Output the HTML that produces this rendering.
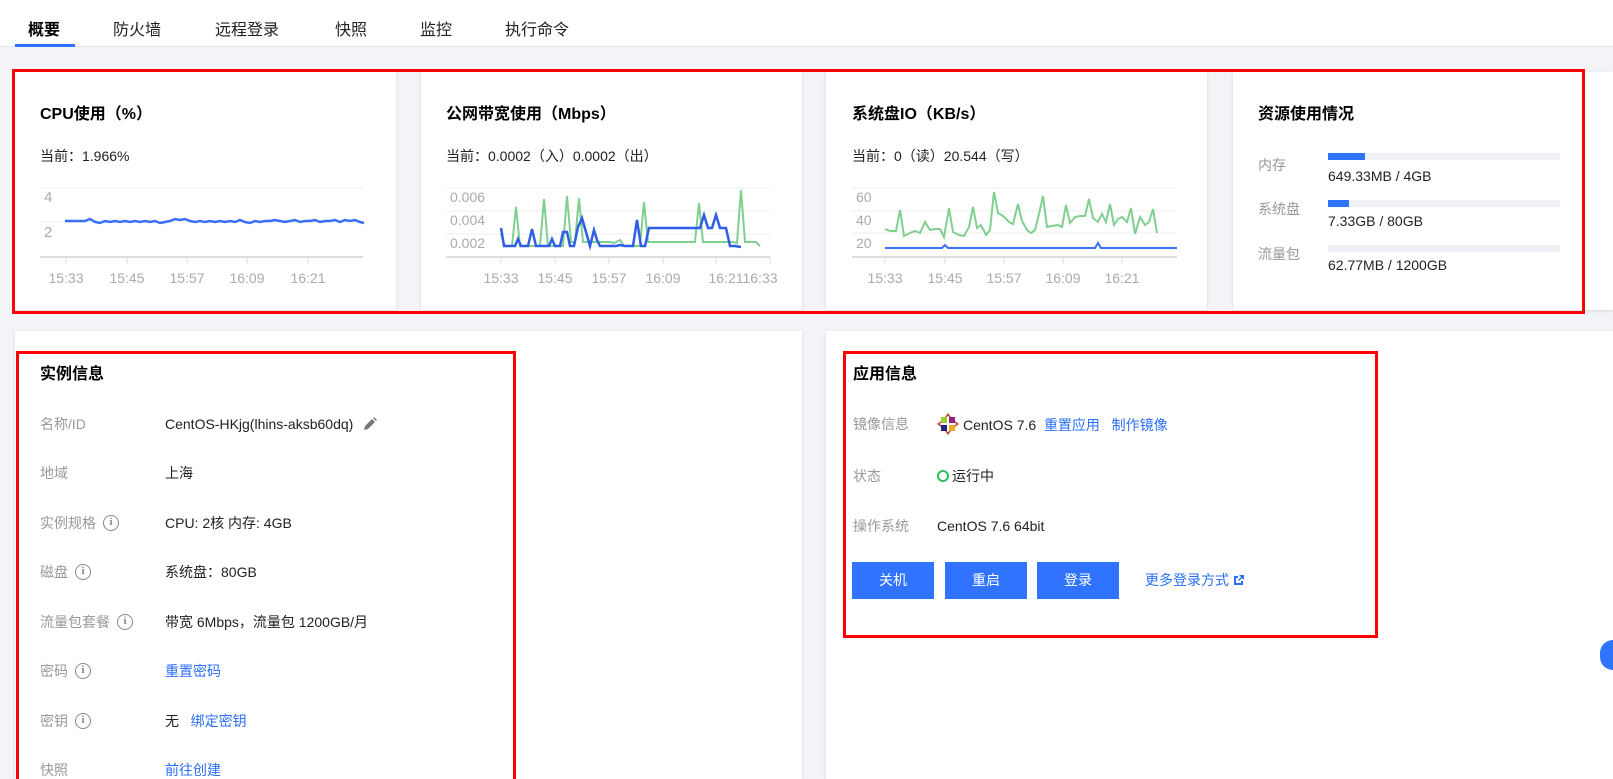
<!DOCTYPE html>
<html style="overflow:hidden;height:779px"><head><meta charset="utf-8"><style>
*{margin:0;padding:0;box-sizing:border-box}
body{width:1613px;height:779px;overflow:hidden;background:#f3f4f7;font-family:"Liberation Sans","Noto Sans CJK SC",sans-serif;color:#000;position:relative;font-size:14px}
.a{position:absolute;white-space:nowrap}
.tabs{position:absolute;left:0;top:0;width:1613px;height:47px;background:#fff;border-bottom:1px solid #e5e8ee}
.tab{position:absolute;top:16px;font-size:16px;color:#222}
.card{position:absolute;background:#fff;box-shadow:0 1px 3px rgba(0,0,0,.12)}
.title{font-size:16px;font-weight:bold;color:#000}
.lbl{color:#999;font-size:14px;display:flex;align-items:center;height:20px;line-height:20px}
.val{color:#222;font-size:14px;line-height:20px}
.link{color:#2b6ff7}
.red{position:absolute;border:3px solid #f00}
.ax{font-size:13px;fill:#aaa;font-family:"Liberation Sans",sans-serif}
.btn{position:absolute;top:562px;width:82px;height:37px;background:#2f73ff;color:#fff;font-size:14px;text-align:center;line-height:37px}
.info{display:inline-block;width:16px;height:16px;border:1.5px solid #888;border-radius:50%;font-size:11px;line-height:13px;text-align:center;color:#888;font-weight:bold;margin-left:7px;font-family:"Liberation Serif",serif}
.bar{position:absolute;left:1328px;width:232px;height:7px;background:#eef0f5}
.bar i{position:absolute;left:0;top:0;height:7px;background:#2f73ff}
</style></head><body>
<div class="tabs">
<span class="tab" style="left:28px;font-weight:bold;color:#000">概要</span>
<span class="tab" style="left:113px">防火墙</span>
<span class="tab" style="left:215px">远程登录</span>
<span class="tab" style="left:335px">快照</span>
<span class="tab" style="left:420px">监控</span>
<span class="tab" style="left:505px">执行命令</span>
<div style="position:absolute;left:15px;top:44px;width:60px;height:3px;background:#2f73ff"></div>
</div>

<div class="card" style="left:15px;top:72px;width:381px;height:238px"></div>
<div class="card" style="left:421px;top:72px;width:381px;height:238px"></div>
<div class="card" style="left:826px;top:72px;width:381px;height:238px"></div>
<div class="card" style="left:1233px;top:72px;width:380px;height:238px"></div>

<div class="a title" style="left:40px;top:100px">CPU使用（%）</div>
<div class="a val" style="left:40px;top:146px">当前：1.966%</div>
<div class="a title" style="left:446px;top:100px">公网带宽使用（Mbps）</div>
<div class="a val" style="left:446px;top:146px">当前：0.0002（入）0.0002（出）</div>
<div class="a title" style="left:852px;top:100px">系统盘IO（KB/s）</div>
<div class="a val" style="left:852px;top:146px">当前：0（读）20.544（写）</div>
<div class="a title" style="left:1258px;top:100px">资源使用情况</div>

<svg class="a" style="left:0;top:0" width="1613" height="320">
<g stroke="#eee" stroke-width="1"><line x1="40" y1="188" x2="363" y2="188"/><line x1="40" y1="222" x2="363" y2="222"/>
<line x1="446" y1="188" x2="770" y2="188"/><line x1="446" y1="211" x2="770" y2="211"/><line x1="446" y1="234" x2="770" y2="234"/>
<line x1="852" y1="188" x2="1177" y2="188"/><line x1="852" y1="211" x2="1177" y2="211"/><line x1="852" y1="233" x2="1177" y2="233"/></g>
<g stroke="#ddd" stroke-width="2"><line x1="40" y1="257" x2="363" y2="257"/><line x1="446" y1="257" x2="770" y2="257"/><line x1="852" y1="257" x2="1177" y2="257"/></g>
<g stroke="#ddd"><line x1="66" y1="257" x2="66" y2="264"/><line x1="127" y1="257" x2="127" y2="264"/><line x1="187" y1="257" x2="187" y2="264"/><line x1="247" y1="257" x2="247" y2="264"/><line x1="308" y1="257" x2="308" y2="264"/>
<line x1="501" y1="257" x2="501" y2="264"/><line x1="555" y1="257" x2="555" y2="264"/><line x1="609" y1="257" x2="609" y2="264"/><line x1="663" y1="257" x2="663" y2="264"/><line x1="716" y1="257" x2="716" y2="264"/><line x1="770" y1="257" x2="770" y2="264"/>
<line x1="885" y1="257" x2="885" y2="264"/><line x1="945" y1="257" x2="945" y2="264"/><line x1="1004" y1="257" x2="1004" y2="264"/><line x1="1063" y1="257" x2="1063" y2="264"/><line x1="1122" y1="257" x2="1122" y2="264"/></g>
<text class="ax" x="44" y="202" style="font-size:15px">4</text><text class="ax" x="44" y="237" style="font-size:15px">2</text>
<g class="ax" text-anchor="middle" style="font-size:14px"><text x="66" y="283">15:33</text><text x="127" y="283">15:45</text><text x="187" y="283">15:57</text><text x="247" y="283">16:09</text><text x="308" y="283">16:21</text>
<text x="501" y="283">15:33</text><text x="555" y="283">15:45</text><text x="609" y="283">15:57</text><text x="663" y="283">16:09</text><text x="743" y="283">16:2116:33</text>
<text x="885" y="283">15:33</text><text x="945" y="283">15:45</text><text x="1004" y="283">15:57</text><text x="1063" y="283">16:09</text><text x="1122" y="283">16:21</text></g>
<text class="ax" x="450" y="202" style="font-size:14px">0.006</text><text class="ax" x="450" y="225" style="font-size:14px">0.004</text><text class="ax" x="450" y="248" style="font-size:14px">0.002</text>
<text class="ax" x="856" y="202" style="font-size:14px">60</text><text class="ax" x="856" y="225" style="font-size:14px">40</text><text class="ax" x="856" y="248" style="font-size:14px">20</text>
<polyline fill="none" stroke="#3a6ff7" stroke-width="2.5" points="65,221 85,221 90,219 95,222 100,223 105,221 110,222 115,221 120,222 125,221 130,222 135,221 140,222 145,221 150,222 155,221 160,223 165,222 170,221 175,219 180,220 185,219 190,221 195,222 200,221 205,222 210,221 215,222 220,221 225,222 230,221 235,222 240,220 245,222 250,223 255,221 260,222 265,221 270,221 275,220 280,221 285,222 290,221 295,220 300,222 305,221 310,221 315,220 320,222 325,221 330,221 335,220 340,222 345,220 350,221 355,220 360,222 364,223"/>
<polyline fill="none" stroke="#7fd08f" stroke-width="2" points="501,234 505,246 512,246 516,207 520,246 540,246 544,199 548,246 563,246 567,196 571,242 575,242 579,198 583,242 610,242 614,243 620,240 624,246 640,246 644,202 648,242 695,242 699,203 703,242 733,242 737,243 741,190 745,242 756,242 760,246"/>
<polyline fill="none" stroke="#2f5fe8" stroke-width="2.5" points="501,228 504,246 515,246 518,239 521,246 528,246 532,229 536,246 549,246 552,239 555,246 560,246 563,232 567,232 570,246 574,246 578,227 582,218 586,232 590,246 594,230 597,240 600,246 612,246 616,246 620,245 625,246 633,246 637,220 641,246 645,246 649,228 700,228 704,215 708,228 712,228 716,215 720,228 726,228 730,246 735,246 741,247"/>
<polyline fill="none" stroke="#7fd08f" stroke-width="2" points="885,229 890,231 896,231 900,210 904,236 910,233 915,231 920,233 925,222 930,230 935,229 940,229 944,237 949,208 953,232 959,235 964,236 969,227 973,207 977,228 981,225 986,235 990,230 994,192 998,213 1003,216 1009,222 1013,224 1018,204 1022,221 1027,230 1031,233 1035,230 1039,214 1043,196 1047,227 1052,226 1058,225 1062,227 1066,205 1070,223 1075,217 1080,216 1085,216 1089,199 1093,218 1098,222 1102,214 1106,222 1110,204 1114,225 1118,219 1122,217 1127,222 1131,208 1135,234 1140,217 1145,225 1149,222 1153,209 1157,233"/>
<polyline fill="none" stroke="#3a6ff7" stroke-width="2" points="885,248 942,248 945,245 948,248 1095,248 1098,243 1101,248 1177,248"/>
</svg>

<div class="a lbl" style="left:1258px;top:155px">内存</div>
<div class="bar" style="top:153px"><i style="width:37px"></i></div>
<div class="a val" style="left:1328px;top:166px">649.33MB / 4GB</div>
<div class="a lbl" style="left:1258px;top:199px">系统盘</div>
<div class="bar" style="top:200px"><i style="width:21px"></i></div>
<div class="a val" style="left:1328px;top:211px">7.33GB / 80GB</div>
<div class="a lbl" style="left:1258px;top:244px">流量包</div>
<div class="bar" style="top:245px"></div>
<div class="a val" style="left:1328px;top:255px">62.77MB / 1200GB</div>

<div class="red" style="left:12px;top:69px;width:1573px;height:245px"></div>

<div class="card" style="left:15px;top:331px;width:787px;height:448px"></div>
<div class="card" style="left:826px;top:331px;width:787px;height:448px"></div>

<div class="a title" style="left:40px;top:360px">实例信息</div>
<div class="a lbl" style="left:40px;top:414px">名称/ID</div>
<div class="a val" style="left:165px;top:414px">CentOS-HKjg(lhins-aksb60dq)
<svg width="14" height="14" viewBox="0 0 14 14" style="vertical-align:-2px;margin-left:6px"><path d="M1 13l1-4 7-7 3 3-7 7z M10 1l1-1 3 3-1 1z" fill="#777"/></svg></div>
<div class="a lbl" style="left:40px;top:463px">地域</div><div class="a val" style="left:165px;top:463px">上海</div>
<div class="a lbl" style="left:40px;top:513px">实例规格<span class="info">i</span></div><div class="a val" style="left:165px;top:513px">CPU: 2核 内存: 4GB</div>
<div class="a lbl" style="left:40px;top:562px">磁盘<span class="info">i</span></div><div class="a val" style="left:165px;top:562px">系统盘：80GB</div>
<div class="a lbl" style="left:40px;top:612px">流量包套餐<span class="info">i</span></div><div class="a val" style="left:165px;top:612px">带宽 6Mbps，流量包 1200GB/月</div>
<div class="a lbl" style="left:40px;top:661px">密码<span class="info">i</span></div><div class="a val" style="left:165px;top:661px;color:#2b6ff7">重置密码</div>
<div class="a lbl" style="left:40px;top:711px">密钥<span class="info">i</span></div><div class="a val" style="left:165px;top:711px">无&nbsp;&nbsp;&nbsp;<span class="link">绑定密钥</span></div>
<div class="a lbl" style="left:40px;top:760px;height:19px;overflow:hidden">快照</div><div class="a val" style="left:165px;top:760px;color:#2b6ff7;height:19px;overflow:hidden">前往创建</div>
<div class="red" style="left:16px;top:351px;width:500px;height:428px;border-bottom:none"></div>

<div class="a title" style="left:853px;top:360px">应用信息</div>
<div class="a lbl" style="left:853px;top:414px">镜像信息</div>
<div class="a val" style="left:937px;top:413px"><svg width="22" height="22" viewBox="0 0 22 22" style="vertical-align:-5px;margin-right:4px"><rect x="4" y="4" width="6" height="6" fill="#9ccd2a"/><rect x="12" y="4" width="6" height="6" fill="#932279"/><rect x="4" y="12" width="6" height="6" fill="#262577"/><rect x="12" y="12" width="6" height="6" fill="#efa724"/><path d="M11 0l3 4h-6zM11 22l3-4h-6zM0 11l4-3v6zM22 11l-4-3v6z" fill="#c44"/><path d="M3 11h16M11 3v16" stroke="#fff" stroke-width="1.5"/></svg>CentOS 7.6&nbsp;&nbsp;<span class="link">重置应用</span>&nbsp;&nbsp;&nbsp;<span class="link">制作镜像</span></div>
<div class="a lbl" style="left:853px;top:466px">状态</div>
<div class="a val" style="left:937px;top:466px"><span style="display:inline-block;width:12px;height:12px;border:2px solid #29c15a;border-radius:50%;vertical-align:-1px;margin-right:3px"></span>运行中</div>
<div class="a lbl" style="left:853px;top:516px">操作系统</div><div class="a val" style="left:937px;top:516px">CentOS 7.6 64bit</div>
<div class="btn" style="left:852px">关机</div>
<div class="btn" style="left:945px">重启</div>
<div class="btn" style="left:1037px">登录</div>
<div class="a link" style="left:1145px;top:570px">更多登录方式 <svg width="12" height="12" viewBox="0 0 12 12" style="vertical-align:-1px"><path d="M1 2h4v2H3v5h5V7h2v4H1z M6 1h5v5l-2-2-3 3-1-1 3-3z" fill="#2b6ff7"/></svg></div>
<div class="red" style="left:843px;top:351px;width:535px;height:287px"></div>

<div style="position:absolute;left:1600px;top:640px;width:13px;height:30px;border-radius:15px 0 0 15px;background:#2f73ff"></div>
</body></html>
